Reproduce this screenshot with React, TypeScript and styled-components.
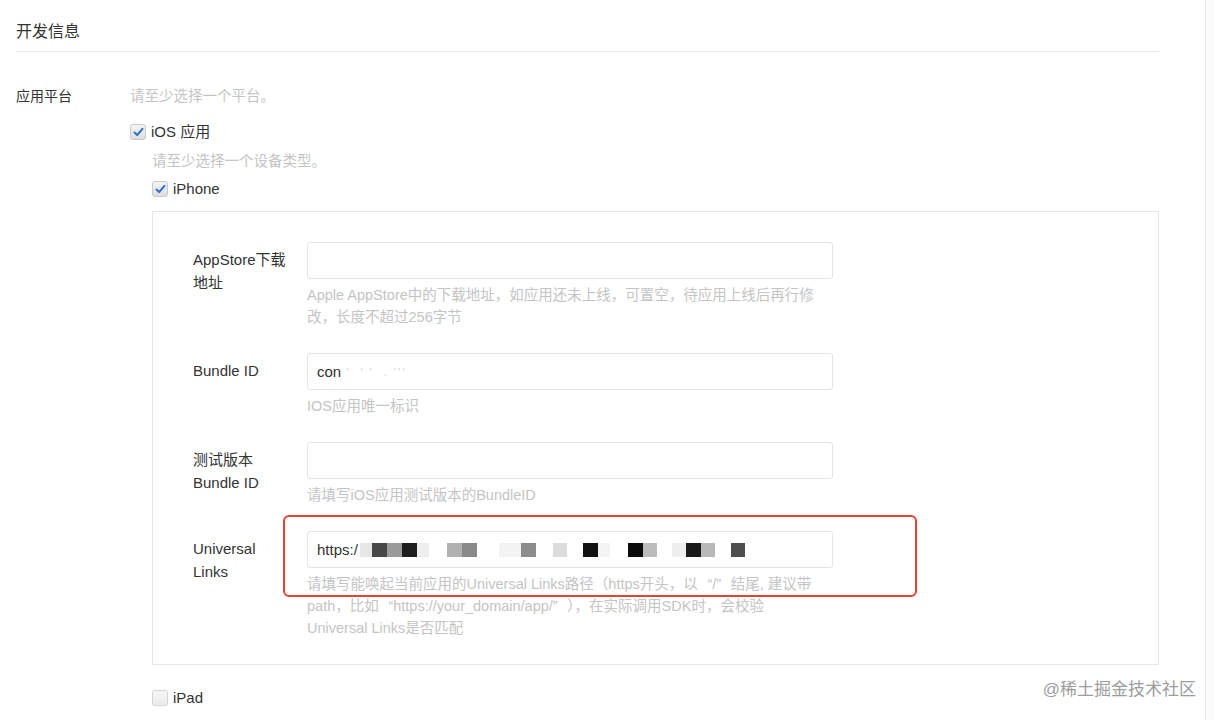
import React from "react";
import styled, { createGlobalStyle } from "styled-components";

const GlobalStyle = createGlobalStyle`
  html, body { margin: 0; padding: 0; background: #ffffff; }
  body {
    font-family: "Liberation Sans", "Noto Sans CJK SC", sans-serif;
    color: #333333;
    -webkit-font-smoothing: antialiased;
  }
  * { box-sizing: border-box; }
`;

const Page = styled.div`
  display: flex;
  width: 1214px;
  height: 720px;
  position: relative;
  overflow: hidden;
`;

const Main = styled.main`
  flex: 0 0 1205px;
  padding: 0 0 0 16px;
`;

const ScrollTrack = styled.div`
  flex: 1;
  border-left: 1px solid #e9e9e9;
  background: #fbfbfb;
`;

const Content = styled.div`
  width: 1143px;
`;

const SectionTitle = styled.h2`
  margin: 0;
  padding: 20px 0 7px;
  font-size: 16px;
  line-height: 24px;
  font-weight: 400;
  color: #333;
  border-bottom: 1px solid #e8e8e8;
`;

const PlatformRow = styled.div`
  display: grid;
  grid-template-columns: 114px 1fr;
  margin-top: 33px;
`;

const RowLabel = styled.div`
  font-size: 14px;
  line-height: 22px;
  color: #333;
`;

const Stack = styled.div<{ $indent?: number }>`
  display: flex;
  flex-direction: column;
  align-items: flex-start;
  margin-left: ${(p) => p.$indent ?? 0}px;
`;

const Hint = styled.div<{ $mt?: number }>`
  font-size: 14.5px;
  line-height: 22px;
  color: #c4c4c4;
  margin-top: ${(p) => p.$mt ?? 0}px;
`;

const CheckRow = styled.label<{ $mt?: number }>`
  display: inline-flex;
  align-items: center;
  gap: 5px;
  margin-top: ${(p) => p.$mt ?? 0}px;
  font-size: 15px;
  line-height: 22px;
  color: #333;
`;

const Box = styled.span<{ $checked?: boolean }>`
  width: 16px;
  height: 16px;
  border-radius: 3px;
  border: 1px solid ${(p) => (p.$checked ? "#c9c9c9" : "#d4d4d4")};
  background: ${(p) =>
    p.$checked
      ? "linear-gradient(#f4f4f4, #dedede)"
      : "linear-gradient(#f7f7f7, #e9e9e9)"};
  display: inline-flex;
  align-items: center;
  justify-content: center;
`;

const Panel = styled.div`
  margin-top: 11px;
  width: 1007px;
  border: 1px solid #e6e6e6;
  padding: 30px 0 25px 40px;
  display: flex;
  flex-direction: column;
  gap: 25px;
`;

const Field = styled.div`
  display: grid;
  grid-template-columns: 114px 526px;
  grid-template-rows: auto auto;
  position: relative;
`;

const FieldLabel = styled.div`
  grid-row: 1 / span 2;
  grid-column: 1;
  padding-top: 7px;
  font-size: 15px;
  line-height: 22.5px;
  color: #333;
`;

const InputBox = styled.div`
  grid-row: 1;
  grid-column: 2;
  height: 37px;
  border: 1px solid #e4e4e4;
  border-radius: 3px;
  background: #fff;
  padding: 0 9px;
  display: flex;
  align-items: center;
  font-size: 15px;
  color: #333;
  white-space: nowrap;
  overflow: hidden;
`;

const FieldHint = styled.div`
  grid-row: 2;
  grid-column: 2;
  margin-top: 5px;
  font-size: 14.5px;
  line-height: 22px;
  color: #c4c4c4;
`;

const HintLine = styled.span`
  display: block;
  white-space: nowrap;
`;

const Quote = styled.span<{ $open?: boolean }>`
  display: inline-block;
  width: 1em;
  text-align: ${(p) => (p.$open ? "right" : "left")};
`;

const Faint = styled.span`
  color: #d2d2d2;
  letter-spacing: 2px;
  font-size: 11px;
`;

const Pixel = styled.span<{ $c: string; $w?: number; $gap?: number }>`
  display: inline-block;
  width: ${(p) => p.$w ?? 15}px;
  height: 14px;
  margin-left: ${(p) => p.$gap ?? 0}px;
  background: ${(p) => p.$c};
`;

const Highlight = styled.div`
  position: absolute;
  left: 90px;
  top: -16px;
  width: 634px;
  height: 82px;
  border: 2px solid #e5432f;
  border-radius: 6px;
  pointer-events: none;
`;

const Watermark = styled.div`
  position: absolute;
  right: 18px;
  top: 679px;
  font-size: 17px;
  line-height: 22px;
  color: #9c9c9c;
  text-shadow: 0 0 2px #fff;
`;

const Check = () => (
  <svg width="11" height="10" viewBox="0 0 11 10">
    <path d="M1.5 5.5 L4.2 8 L9.5 1.8" fill="none" stroke="#2f72c9" strokeWidth="2" strokeLinecap="round" strokeLinejoin="round" />
  </svg>
);

const Checkbox = ({ checked, label, mt }: { checked: boolean; label: string; mt?: number }) => (
  <CheckRow $mt={mt}>
    <Box $checked={checked}>{checked && <Check />}</Box>
    {label}
  </CheckRow>
);

type Px = { c: string; w?: number; g?: number };
const pixels: Px[] = [
  { c: "#e6e6e6", w: 12, g: 2 },
  { c: "#474747", w: 15 },
  { c: "#9a9a9a", w: 15 },
  { c: "#1e1e1e", w: 15 },
  { c: "#eeeeee", w: 12 },
  { c: "#b1b1b1", w: 15, g: 18 },
  { c: "#8a8a8a", w: 15 },
  { c: "#f3f3f3", w: 22, g: 22 },
  { c: "#8c8c8c", w: 15 },
  { c: "#dcdcdc", w: 14, g: 17 },
  { c: "#121212", w: 15, g: 16 },
  { c: "#f4f4f4", w: 12 },
  { c: "#0c0c0c", w: 15, g: 18 },
  { c: "#bcbcbc", w: 14 },
  { c: "#eeeeee", w: 14, g: 15 },
  { c: "#1a1a1a", w: 15 },
  { c: "#b8b8b8", w: 14 },
  { c: "#4e4e4e", w: 14, g: 16 },
];

export default function App() {
  return (
    <>
      <GlobalStyle />
      <Page>
        <Main>
          <Content>
            <SectionTitle>开发信息</SectionTitle>
            <PlatformRow>
              <RowLabel>应用平台</RowLabel>
              <Stack>
                <Hint>请至少选择一个平台。</Hint>
                <Checkbox checked label="iOS 应用" mt={14} />
                <Stack $indent={22}>
                  <Hint $mt={7}>请至少选择一个设备类型。</Hint>
                  <Checkbox checked label="iPhone" mt={6} />
                  <Panel>
                    <Field>
                      <FieldLabel>
                        AppStore下载
                        <br />
                        地址
                      </FieldLabel>
                      <InputBox />
                      <FieldHint>
                        <HintLine>Apple AppStore中的下载地址，如应用还未上线，可置空，待应用上线后再行修</HintLine>
                        <HintLine>改，长度不超过256字节</HintLine>
                      </FieldHint>
                    </Field>
                    <Field>
                      <FieldLabel>Bundle ID</FieldLabel>
                      <InputBox>
                        con<Faint>&nbsp;'&nbsp;&nbsp;' '&nbsp;&nbsp;.&nbsp;'''</Faint>
                      </InputBox>
                      <FieldHint>
                        <HintLine>IOS应用唯一标识</HintLine>
                      </FieldHint>
                    </Field>
                    <Field>
                      <FieldLabel>
                        测试版本
                        <br />
                        Bundle ID
                      </FieldLabel>
                      <InputBox />
                      <FieldHint>
                        <HintLine>请填写iOS应用测试版本的BundleID</HintLine>
                      </FieldHint>
                    </Field>
                    <Field>
                      <Highlight />
                      <FieldLabel>
                        Universal
                        <br />
                        Links
                      </FieldLabel>
                      <InputBox>
                        https:/
                        {pixels.map((p, i) => (
                          <Pixel key={i} $c={p.c} $w={p.w} $gap={p.g} />
                        ))}
                      </InputBox>
                      <FieldHint>
                        <HintLine>
                          请填写能唤起当前应用的Universal Links路径（https开头，以<Quote $open>“</Quote>/<Quote>”</Quote>结尾, 建议带
                        </HintLine>
                        <HintLine>
                          path，比如<Quote $open>“</Quote>https://your_domain/app/<Quote>”</Quote>），在实际调用SDK时，会校验
                        </HintLine>
                        <HintLine>Universal Links是否匹配</HintLine>
                      </FieldHint>
                    </Field>
                  </Panel>
                  <Checkbox checked={false} label="iPad" mt={22} />
                </Stack>
              </Stack>
            </PlatformRow>
          </Content>
        </Main>
        <ScrollTrack />
        <Watermark>@稀土掘金技术社区</Watermark>
      </Page>
    </>
  );
}
